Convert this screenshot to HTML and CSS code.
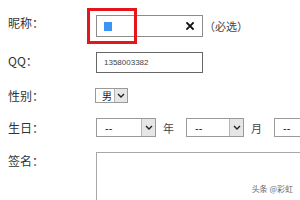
FILE: index.html
```html
<!DOCTYPE html>
<html lang="zh-CN">
<head>
<meta charset="utf-8">
<title>表单</title>
<link rel="stylesheet" href="styles.css">
</head>
<body>
<div class="form">
  <div class="row r-name">
    <span class="label">昵称：</span>
    <div class="field name-field">
      <span class="caret"></span>
      <svg class="clear" width="8" height="8" viewBox="0 0 8 8"><path d="M1 1 L7 7 M7 1 L1 7" stroke="#111" stroke-width="1.8" stroke-linecap="square"/></svg>
      <span class="mark"></span>
    </div>
    <span class="hint">（必选）</span>
  </div>
  <div class="row r-qq">
    <span class="label">QQ：</span>
    <div class="field qq-field">1358003382</div>
  </div>
  <div class="row r-sex">
    <span class="label">性别：</span>
    <div class="select sex-select"><span class="val">男</span><span class="arrow"><svg width="8" height="5" viewBox="0 0 8 5"><path d="M1 1 L4 4 L7 1" fill="none" stroke="#222" stroke-width="1.4"/></svg></span></div>
  </div>
  <div class="row r-birth">
    <span class="label">生日：</span>
    <div class="select date-select y"><span class="val">--</span><span class="arrow"><svg width="8" height="5" viewBox="0 0 8 5"><path d="M1 1 L4 4 L7 1" fill="none" stroke="#222" stroke-width="1.4"/></svg></span></div>
    <span class="unit">年</span>
    <div class="select date-select m"><span class="val">--</span><span class="arrow"><svg width="8" height="5" viewBox="0 0 8 5"><path d="M1 1 L4 4 L7 1" fill="none" stroke="#222" stroke-width="1.4"/></svg></span></div>
    <span class="unit">月</span>
    <div class="select date-select d"><span class="val">--</span><span class="arrow"><svg width="8" height="5" viewBox="0 0 8 5"><path d="M1 1 L4 4 L7 1" fill="none" stroke="#222" stroke-width="1.4"/></svg></span></div>
  </div>
  <div class="row r-sign">
    <span class="label">签名：</span>
    <div class="textarea"></div>
  </div>
</div>
<div class="watermark">头条 @彩虹</div>
</body>
</html>
```
FILE: styles.css
```css
html, body {
  margin: 0;
  padding: 0;
}
body {
  width: 300px;
  height: 200px;
  overflow: hidden;
  background: #fff;
  position: relative;
  font-family: "Liberation Sans", "Noto Sans CJK SC", sans-serif;
  font-size: 12px;
  color: #333;
}
.form {
  display: flex;
  flex-direction: column;
  gap: 15px;
  padding: 15px 0 0 8px;
}
.row {
  display: flex;
  align-items: center;
  flex-wrap: nowrap;
  white-space: nowrap;
}
.label {
  width: 88px;
  flex: none;
  font-family: "Noto Sans CJK SC", sans-serif;
  font-size: 12px;
  line-height: 14px;
  color: #333;
}
.r-name .label { margin-bottom: 6px; }
.r-qq .label { margin-bottom: 4px; }
.field {
  box-sizing: border-box;
  width: 107px;
  flex: none;
  position: relative;
}
.name-field {
  height: 22px;
  border: 1px solid #8c8c8c;
  display: flex;
  align-items: center;
  justify-content: space-between;
  padding: 0 8px 0 7px;
}
.caret {
  width: 8px;
  height: 9px;
  background: #3a95f4;
}
.clear { display: block; }
.mark {
  position: absolute;
  left: -10px;
  top: -8px;
  width: 44px;
  height: 30px;
  border: 3px solid #e4161c;
}
.hint {
  margin-left: 1px;
  font-family: "Noto Sans CJK SC", sans-serif;
  font-size: 11px;
  color: #444;
}
.qq-field {
  height: 21px;
  border: 1px solid #666;
  padding-left: 7px;
  font-size: 8px;
  line-height: 19px;
  color: #444;
}
.select {
  box-sizing: border-box;
  flex: none;
  display: flex;
  align-items: stretch;
  border: 1px solid #9a9a9a;
  background: #fff;
}
.select .val {
  flex: 1;
  display: flex;
  align-items: center;
  font-size: 11px;
  color: #222;
}
.select .arrow {
  flex: none;
  display: flex;
  align-items: center;
  justify-content: center;
  background: #e6e6e6;
  border-left: 1px solid #b5b5b5;
}
.sex-select {
  width: 33px;
  height: 15px;
  margin-left: -1px;
}
.sex-select .val {
  justify-content: flex-end;
  padding-right: 2px;
  font-family: "Noto Sans CJK SC", sans-serif;
  font-size: 10px;
}
.sex-select .arrow { width: 12px; }
.date-select {
  height: 19px;
}
.date-select .val { padding-left: 8px; }
.date-select .arrow { width: 13px; }
.date-select.y { width: 60px; }
.date-select.m { width: 58px; }
.date-select.d { width: 58px; }
.unit {
  font-family: "Noto Sans CJK SC", sans-serif;
  font-size: 11px;
  color: #444;
  margin: 0 12px 0 7px;
}
.textarea {
  box-sizing: border-box;
  flex: none;
  width: 230px;
  height: 60px;
  border: 1px solid #a8a8a8;
  background: #fff;
}
.r-sign { align-items: flex-start; }
.r-sign .label { margin-top: 2px; }
.watermark {
  position: absolute;
  right: 7px;
  bottom: 6px;
  font-family: "Noto Sans CJK SC", sans-serif;
  font-size: 8px;
  color: #6a6a6a;
}
```
